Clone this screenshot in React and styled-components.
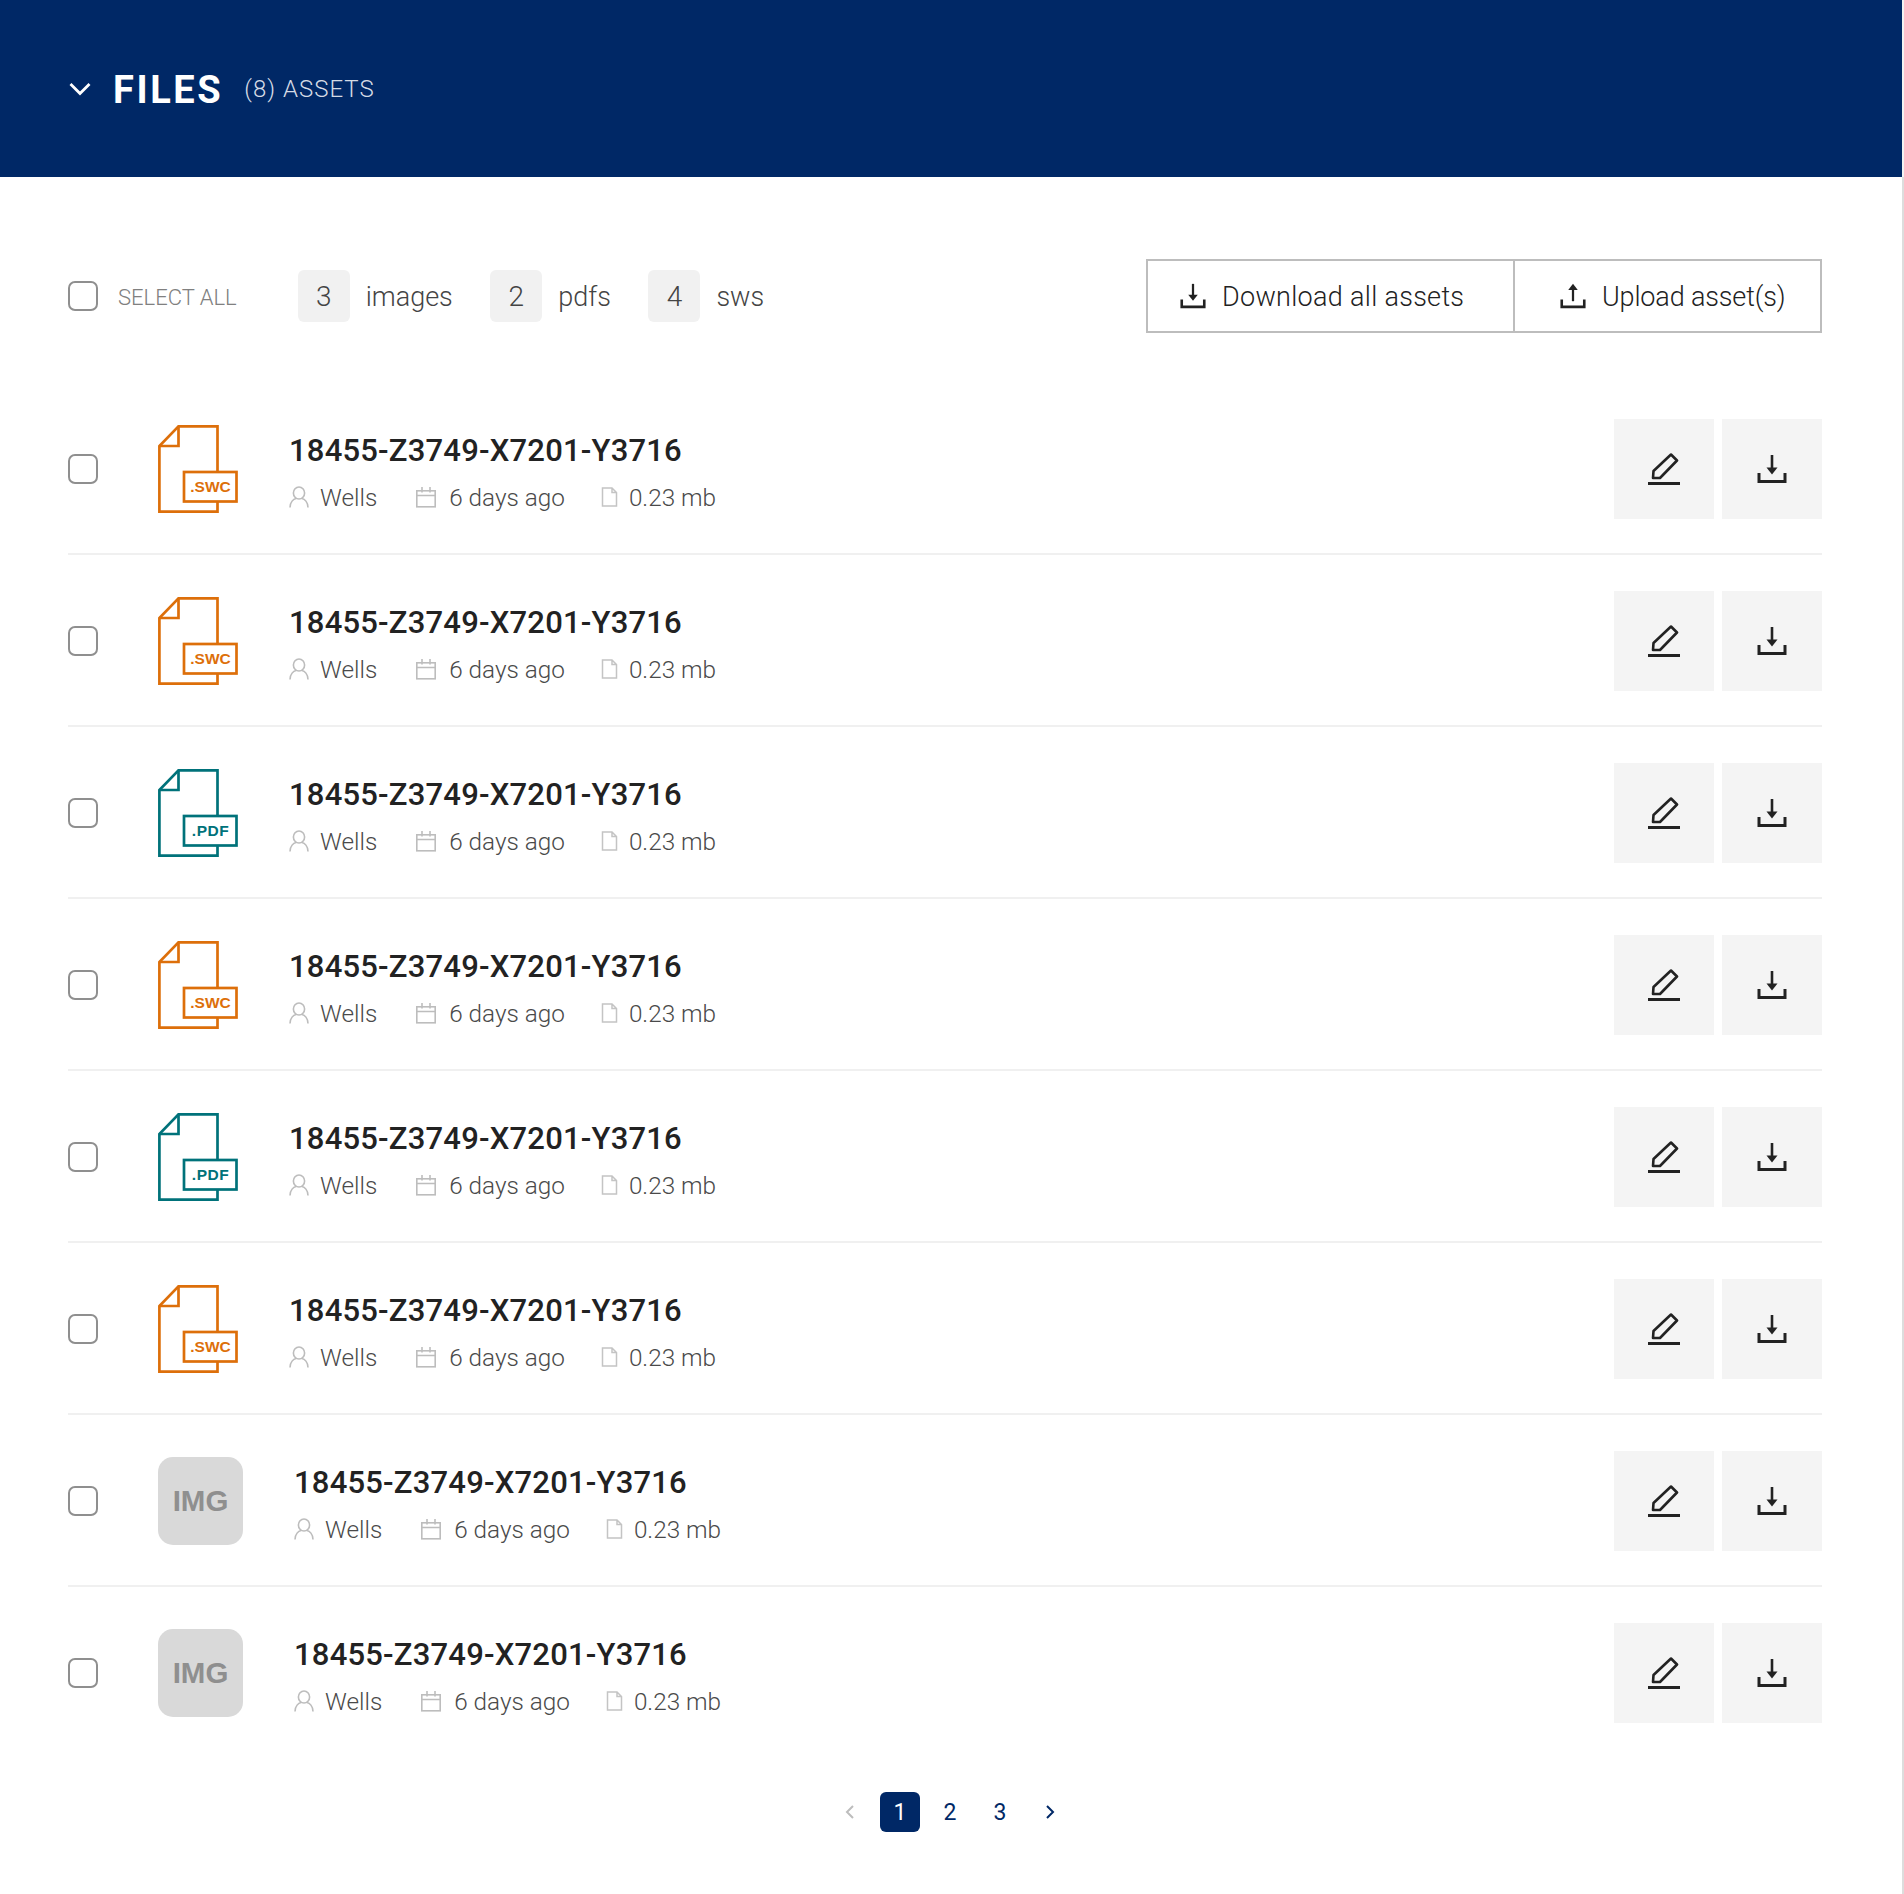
import React from 'react';
import styled, { createGlobalStyle } from 'styled-components';

const GlobalStyle = createGlobalStyle`
  html, body {
    margin: 0;
    padding: 0;
    background-color: #fff;
    font-family: Roboto, "Open Sans", sans-serif;
  }
`;

const Page = styled.div`
  width: 1904px;
  box-sizing: border-box;
`;

const Header = styled.header`
  height: 177px;
  box-sizing: border-box;
  border-right: 2px solid #f2f2f2;
  display: flex;
  align-items: center;
  padding-left: 69px;
  background-color: #002866;
  color: #fff;
`;

const Title = styled.h1`
  margin: 2px 0 0 22px;
  font-size: 38px;
  font-weight: 700;
  letter-spacing: 2.6px;
  line-height: 1;
`;

const AssetCount = styled.span`
  margin-left: 21px;
  font-size: 24px;
  font-weight: 300;
  letter-spacing: 1px;
  color: #d5dbe5;
`;

const Content = styled.main`
  box-sizing: border-box;
  height: 1717px;
  padding: 82px 80px 0 68px;
  border-right: 2px solid #ddd;
`;

const Toolbar = styled.div`
  display: flex;
  align-items: center;
  justify-content: space-between;
  height: 74px;
  margin-bottom: 50px;
`;

const ElementGroup = styled.div`
  display: flex;
  align-items: center;
`;

const Check = styled.input.attrs({ type: 'checkbox' })`
  appearance: none;
  flex: none;
  width: 30px;
  height: 30px;
  margin: 0;
  box-sizing: border-box;
  border: 2px solid #8f8f8f;
  border-radius: 7px;
  background-color: #fff;
`;

const SelectAll = styled.span`
  margin: 2px 61px 0 20px;
  font-size: 22px;
  font-weight: 300;
  color: #808080;
`;

const Chip = styled.span`
  width: 52px;
  height: 52px;
  display: flex;
  align-items: center;
  justify-content: center;
  border-radius: 6px;
  background-color: #f1f1f1;
  font-size: 28px;
  font-weight: 300;
  color: #444;
`;

const ChipLabel = styled.span`
  margin: 2px 37.5px 0 16px;
  font-size: 27px;
  font-weight: 300;
  color: #444;
`;

const ButtonGroup = styled.div`
  display: flex;
  height: 74px;
  box-sizing: border-box;
  border: 2px solid #bdbdbd;
`;

const GroupButton = styled.div`
  display: flex;
  align-items: center;
  box-sizing: border-box;
  width: ${(props) => props.$width}px;
  padding-left: ${(props) => props.$pad}px;
  font-size: 27px;
  letter-spacing: ${(props) => props.$spacing}px;
  font-weight: 300;
  color: #222;

  & + & {
    border-left: 2px solid #bdbdbd;
  }

  svg {
    width: 26px;
    height: 26px;
    margin-right: 16px;
  }
`;

const ButtonLabel = styled.span`
  margin-top: 2px;
`;

const Row = styled.div`
  display: flex;
  align-items: center;
  padding: 36px 0 34px;
  border-bottom: 2px solid ${(props) => (props.$last ? 'transparent' : '#f0f0f0')};
`;

const Thumb = styled.div`
  flex: none;
  margin-left: 60px;
  height: 88px;
  width: ${(props) => (props.$img ? 85 : 80)}px;
`;

const ImgThumb = styled(Thumb)`
  display: flex;
  align-items: center;
  justify-content: center;
  border-radius: 15px;
  background-color: #d9d9d9;
  color: #8f8f8f;
  font-family: "Liberation Sans", sans-serif;
  font-size: 29.5px;
  font-weight: 700;
`;

const Info = styled.div`
  flex: 1;
  margin-left: 51px;
  margin-top: 5px;
`;

const FileName = styled.div`
  font-size: 31px;
  font-weight: 500;
  line-height: 38px;
  letter-spacing: 0.2px;
  color: #222;
`;

const Meta = styled.div`
  display: flex;
  align-items: center;
  margin-top: 13px;
  height: 28px;
  font-size: 24.3px;
  font-weight: 300;
  color: #4a4a4a;
`;

const MetaItem = styled.span`
  display: flex;
  align-items: center;
  margin-right: ${(props) => props.$gap}px;

  svg {
    margin-right: ${(props) => props.$iconGap}px;
  }
`;

const ActionButton = styled.div`
  flex: none;
  width: 100px;
  height: 100px;
  display: flex;
  align-items: center;
  justify-content: center;
  background-color: #f4f4f4;

  & + & {
    margin-left: 8px;
  }
`;

const Pagination = styled.nav`
  display: flex;
  justify-content: center;
  gap: 10px;
  margin-top: 33px;
  padding-left: 10px;
`;

const PageItem = styled.span`
  width: 40px;
  height: 40px;
  display: flex;
  align-items: center;
  justify-content: center;
  border-radius: 6px;
  font-size: 23px;
  color: ${(props) => (props.$active ? '#fff' : '#002866')};
  background-color: ${(props) => (props.$active ? '#002866' : 'transparent')};
`;

const Chevron = ({ dir, color }) => (
  <svg width="12" height="16" viewBox="0 0 12 16" fill="none" stroke={color} strokeWidth="2">
    <path d={dir === 'left' ? 'M9 2 L3 8 L9 14' : 'M3 2 L9 8 L3 14'} />
  </svg>
);

const ChevronDown = () => (
  <svg width="22" height="14" viewBox="0 0 22 14" fill="none" stroke="#fff" strokeWidth="2.8">
    <path d="M1.5 2 L11 11.5 L20.5 2" />
  </svg>
);

const DownloadIcon = ({ size = 30 }) => (
  <svg width={size} height={size} viewBox="0 0 30 30" fill="none" stroke="#222" strokeWidth="3">
    <path d="M15 1 V15" strokeWidth="2.6" />
    <path d="M9.5 13.5 H20.5 L15 20.5 Z" fill="#222" stroke="none" />
    <path d="M2 19 V27.5 H28 V19" />
  </svg>
);

const UploadIcon = () => (
  <svg width="30" height="30" viewBox="0 0 30 30" fill="none" stroke="#222" strokeWidth="3">
    <path d="M15 7 V21" strokeWidth="2.6" />
    <path d="M9.5 8 H20.5 L15 1 Z" fill="#222" stroke="none" />
    <path d="M2 19 V27.5 H28 V19" />
  </svg>
);

const PencilIcon = () => (
  <svg width="32" height="32" viewBox="0 0 32 32" fill="none" stroke="#222" strokeWidth="2.6">
    <path d="M5.5 18 L23 1.5 L29 7.5 L12 25 L5 25 Z" strokeLinejoin="round" />
    <path d="M0 30.5 H32" strokeWidth="3" />
  </svg>
);

const UserIcon = () => (
  <svg width="20" height="22" viewBox="0 0 20 22" fill="none" stroke="#bdbdbd" strokeWidth="1.6">
    <ellipse cx="10" cy="7" rx="5.6" ry="6" />
    <path d="M1 21.5 C1 16 4.5 13 7 12.5 M19 21.5 C19 16 15.5 13 13 12.5" />
  </svg>
);

const CalendarIcon = () => (
  <svg width="22" height="22" viewBox="0 0 22 22" fill="none" stroke="#bdbdbd" strokeWidth="1.6">
    <rect x="1.8" y="4.8" width="18.4" height="16" />
    <path d="M1.8 9.5 H20.2 M7 1 V6.5 M15 1 V6.5" />
  </svg>
);

const PageIcon = () => (
  <svg width="17" height="20" viewBox="0 0 17 20" fill="none" stroke="#c4c4c4" strokeWidth="1.5">
    <path d="M1.5 1 H11 L15.5 5.5 V19 H1.5 Z M11 1 V5.5 H15.5" />
  </svg>
);

const FileIcon = ({ label, color, spacing }) => (
  <svg width="80" height="88" viewBox="0 0 80 88" fill="none" stroke={color} strokeWidth="2.7">
    <path d="M59.5 76 V86.6 H1.4 V21 L20.5 1.4 H59.5 V47" />
    <path d="M20.5 1.4 V21 H1.4" />
    <rect x="26" y="47" width="52.5" height="29.5" />
    <text
      x="52.5"
      y="67"
      textAnchor="middle"
      fill={color}
      stroke="none"
      fontFamily="'Liberation Sans', sans-serif"
      fontWeight="700"
      fontSize="15.5"
      letterSpacing={spacing}
    >
      {label}
    </text>
  </svg>
);

const files = ['swc', 'swc', 'pdf', 'swc', 'pdf', 'swc', 'img', 'img'];

function FileRow({ type, last }) {
  return (
    <Row $last={last}>
      <Check />
      {type === 'img' && <ImgThumb $img>IMG</ImgThumb>}
      {type === 'swc' && (
        <Thumb>
          <FileIcon label=".SWC" color="#dd6f0a" spacing="0" />
        </Thumb>
      )}
      {type === 'pdf' && (
        <Thumb>
          <FileIcon label=".PDF" color="#00727a" spacing="0.5" />
        </Thumb>
      )}
      <Info>
        <FileName>18455-Z3749-X7201-Y3716</FileName>
        <Meta>
          <MetaItem $gap={38} $iconGap={11}>
            <UserIcon />
            Wells
          </MetaItem>
          <MetaItem $gap={36} $iconGap={12}>
            <CalendarIcon />
            6 days ago
          </MetaItem>
          <MetaItem $gap={0} $iconGap={11}>
            <PageIcon />
            0.23 mb
          </MetaItem>
        </Meta>
      </Info>
      <ActionButton>
        <PencilIcon />
      </ActionButton>
      <ActionButton>
        <DownloadIcon />
      </ActionButton>
    </Row>
  );
}

export default function App() {
  return (
    <Page>
      <GlobalStyle />
      <Header>
        <ChevronDown />
        <Title>FILES</Title>
        <AssetCount>(8) ASSETS</AssetCount>
      </Header>
      <Content>
        <Toolbar>
          <ElementGroup>
            <Check />
            <SelectAll>SELECT ALL</SelectAll>
            <Chip>3</Chip>
            <ChipLabel>images</ChipLabel>
            <Chip>2</Chip>
            <ChipLabel>pdfs</ChipLabel>
            <Chip>4</Chip>
            <ChipLabel>sws</ChipLabel>
          </ElementGroup>
          <ButtonGroup>
            <GroupButton $width={365} $pad={32} $spacing={0.3}>
              <DownloadIcon />
              <ButtonLabel>Download all assets</ButtonLabel>
            </GroupButton>
            <GroupButton $width={307} $pad={45} $spacing={-0.15}>
              <UploadIcon />
              <ButtonLabel>Upload asset(s)</ButtonLabel>
            </GroupButton>
          </ButtonGroup>
        </Toolbar>
        {files.map((type, i) => (
          <FileRow key={i} type={type} last={i === files.length - 1} />
        ))}
        <Pagination>
          <PageItem>
            <Chevron dir="left" color="#bdbdbd" />
          </PageItem>
          <PageItem $active>1</PageItem>
          <PageItem>2</PageItem>
          <PageItem>3</PageItem>
          <PageItem>
            <Chevron dir="right" color="#002866" />
          </PageItem>
        </Pagination>
      </Content>
    </Page>
  );
}
